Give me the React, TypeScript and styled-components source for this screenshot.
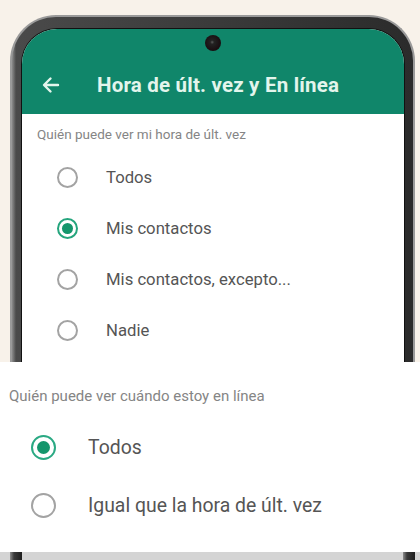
import React from "react";
import styled, { createGlobalStyle } from "styled-components";

const GlobalStyle = createGlobalStyle`
  html, body {
    margin: 0;
    padding: 0;
    background: #f8f2ea;
  }
  * {
    box-sizing: border-box;
  }
`;

const lastSeenOptions = [
  { label: "Todos", checked: false },
  { label: "Mis contactos", checked: true },
  { label: "Mis contactos, excepto...", checked: false },
  { label: "Nadie", checked: false },
];

const onlineOptions = [
  { label: "Todos", checked: true },
  { label: "Igual que la hora de últ. vez", checked: false },
];

const BackArrow = () => (
  <svg width="20" height="20" viewBox="0 0 20 20" fill="none">
    <path
      d="M17 10H3.5M9.5 3.5L3 10l6.5 6.5"
      stroke="#e3f5ec"
      strokeWidth="2.4"
      strokeLinecap="round"
      strokeLinejoin="round"
    />
  </svg>
);

const App = () => {
  return (
    <Page>
      <GlobalStyle />
      <PhoneArea>
        <Frame>
          <Screen>
            <Header>
              <Camera />
              <TitleBar>
                <BackButton>
                  <BackArrow />
                </BackButton>
                <Title>Hora de últ. vez y En línea</Title>
              </TitleBar>
            </Header>
            <Content>
              <SectionLabel>Quién puede ver mi hora de últ. vez</SectionLabel>
              <List>
                {lastSeenOptions.map((item) => (
                  <Row key={item.label}>
                    <Radio checked={item.checked} />
                    <RowText>{item.label}</RowText>
                  </Row>
                ))}
              </List>
            </Content>
          </Screen>
        </Frame>
      </PhoneArea>
      <Card>
        <CardLabel>Quién puede ver cuándo estoy en línea</CardLabel>
        <CardList>
          {onlineOptions.map((item) => (
            <CardRow key={item.label}>
              <BigRadio checked={item.checked} />
              <CardText>{item.label}</CardText>
            </CardRow>
          ))}
        </CardList>
      </Card>
      <BottomStrip>
        <FrameStub />
        <FrameStub />
      </BottomStrip>
    </Page>
  );
};

export default App;

const Page = styled.div`
  width: 420px;
  height: 560px;
  overflow: hidden;
  display: flex;
  flex-direction: column;
  background: #f8f2ea;
  font-family: Roboto, "Noto Sans", Arial, sans-serif;
`;

const PhoneArea = styled.div`
  padding: 15px 5px 0 10px;
`;

const Frame = styled.div`
  height: 347px;
  border-radius: 46px 46px 0 0;
  background: linear-gradient(90deg, #8c8c8c 0, #4a4a4a 4px, #2b2b2b 100%);
  border: 2px solid #9a9a9a;
  border-bottom: none;
  padding: 12px 9px 0 10px;
`;

const Screen = styled.div`
  height: 100%;
  border-radius: 35px 35px 0 0;
  overflow: hidden;
  background: #ffffff;
  box-shadow: 0 0 0 1px #111;
`;

const Header = styled.div`
  height: 85px;
  background: #10866a;
  display: flex;
  flex-direction: column;
  align-items: center;
  padding-top: 6px;
`;

const Camera = styled.div`
  width: 16px;
  height: 16px;
  border-radius: 50%;
  background: radial-gradient(circle at 45% 45%, #5a5a5a 0, #222 2px, #1a1013 60%, #0e0a0b 100%);
`;

const TitleBar = styled.div`
  width: 100%;
  display: flex;
  align-items: center;
  margin-top: 22px;
  padding-left: 19px;
`;

const BackButton = styled.div`
  width: 20px;
  height: 20px;
  display: flex;
`;

const Title = styled.div`
  margin-left: 36px;
  font-size: 20.5px;
  font-weight: 700;
  color: #e3f5ec;
  letter-spacing: 0.2px;
`;

const Content = styled.div`
  padding: 12px 0 0 15px;
`;

const SectionLabel = styled.div`
  font-size: 13.5px;
  line-height: 16px;
  color: #858585;
`;

const List = styled.div`
  margin-top: 10px;
  display: flex;
  flex-direction: column;
`;

const Row = styled.div`
  height: 51px;
  display: flex;
  align-items: center;
  padding-left: 20px;
`;

const Radio = styled.div<{ checked: boolean }>`
  width: 21px;
  height: 21px;
  border-radius: 50%;
  border: 2px solid ${(p) => (p.checked ? "#25a57d" : "#a3a3a3")};
  display: flex;
  align-items: center;
  justify-content: center;

  &::after {
    content: "";
    display: ${(p) => (p.checked ? "block" : "none")};
    width: 11px;
    height: 11px;
    border-radius: 50%;
    background: #14966c;
  }
`;

const RowText = styled.div`
  margin-left: 28px;
  font-size: 16.7px;
  color: #555555;
`;

const Card = styled.div`
  height: 190px;
  background: #ffffff;
  padding: 25px 0 0 9px;
`;

const CardLabel = styled.div`
  font-size: 15px;
  line-height: 18px;
  color: #858585;
`;

const CardList = styled.div`
  margin-top: 13px;
  display: flex;
  flex-direction: column;
`;

const CardRow = styled.div`
  height: 58px;
  display: flex;
  align-items: center;
  padding-left: 22px;
`;

const BigRadio = styled.div<{ checked: boolean }>`
  width: 25px;
  height: 25px;
  border-radius: 50%;
  border: 2.5px solid ${(p) => (p.checked ? "#2aa983" : "#a3a3a3")};
  display: flex;
  align-items: center;
  justify-content: center;

  &::after {
    content: "";
    display: ${(p) => (p.checked ? "block" : "none")};
    width: 13px;
    height: 13px;
    border-radius: 50%;
    background: #14966c;
  }
`;

const CardText = styled.div`
  margin-left: 32px;
  font-size: 19.4px;
  color: #555555;
`;

const BottomStrip = styled.div`
  flex: 1;
  background: #d4d4d4;
  display: flex;
  justify-content: space-between;
  padding: 0 5px 0 10px;
`;

const FrameStub = styled.div`
  width: 12px;
  background: linear-gradient(90deg, #8c8c8c 0, #3a3a3a 4px, #1e1e1e 100%);
`;
